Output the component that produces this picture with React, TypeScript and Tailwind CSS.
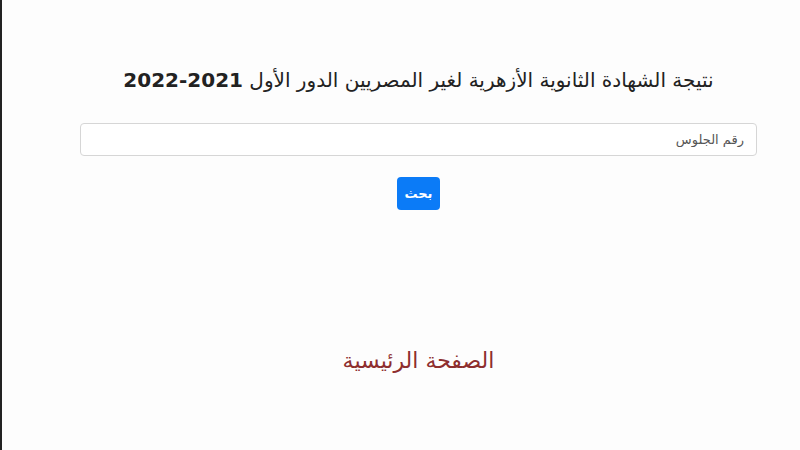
export default function App() {
  return (
    <div
      dir="rtl"
      className="w-[800px] h-[450px] overflow-hidden bg-[#fdfdfd] border-l-2 border-[#222] pl-[35px]"
      style={{ fontFamily: '"DejaVu Sans", "Noto Sans", sans-serif' }}
    >
      <div className="w-[677px] mx-auto flex flex-col items-center">
        <h1 className="mt-[64px] text-[20px] leading-[32px] text-[#222] font-normal whitespace-nowrap">
          نتيجة الشهادة الثانوية الأزهرية لغير المصريين الدور الأول{' '}
          <span dir="ltr" className="font-bold [unicode-bidi:isolate]">2022-2021</span>
        </h1>
        <input
          type="text"
          placeholder="رقم الجلوس"
          className="mt-[27px] w-full h-[33px] px-3 text-[13px] text-[#495057] bg-white border border-[#d6d6d6] rounded-[4px] placeholder:text-[#555] outline-none"
        />
        <button className="mt-[21px] w-[43px] h-[33px] rounded-[4px] bg-[#0b7bf7] text-white text-[13px] font-semibold">
          بحث
        </button>
        <a href="#" className="mt-[134px] text-[22px] text-[#8e2e2e]">
          الصفحة الرئيسية
        </a>
      </div>
    </div>
  );
}
